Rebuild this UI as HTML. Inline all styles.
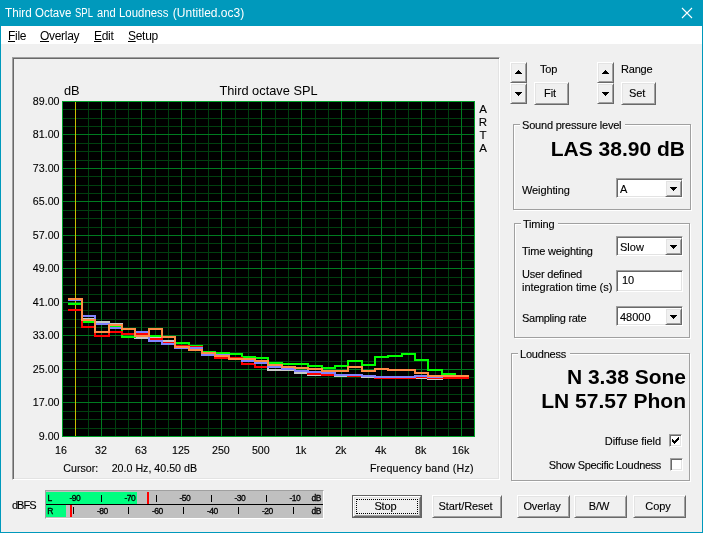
<!DOCTYPE html>
<html><head><meta charset="utf-8"><title>Third Octave SPL and Loudness</title>
<style>
html,body{margin:0;padding:0}
body{will-change:transform;width:703px;height:533px;position:relative;overflow:hidden;background:#f0f0f0;font-family:"Liberation Sans",sans-serif;font-size:11px;color:#000}
*{box-sizing:border-box}
.abs,.t,.btn,.sunk,.grp,.ui,.ax{position:absolute}
#win{position:absolute;left:0;top:0;width:703px;height:533px;border:1px solid #0099bc;border-top:none}
#title{position:absolute;left:0;top:0;width:703px;height:26px;background:#0099bc;color:#fff;font-size:12px}
#title span{position:absolute;top:6px;white-space:nowrap;transform-origin:0 0}
#menu{position:absolute;left:1px;top:26px;width:701px;height:18px;background:#fff;font-size:12px}
#menu span{position:absolute;top:3px;white-space:nowrap;letter-spacing:-0.3px}
#menu u{text-decoration:underline;text-underline-offset:1px}
.ui,.ax,.btn span,.lbl{-webkit-text-stroke:0.12px #000}
.ui{white-space:nowrap;font-size:11px;letter-spacing:-0.2px;line-height:13px}
.ax{white-space:nowrap;font-size:10.67px;line-height:12px}
.btn{background:#f0f0f0;border:1px solid;border-color:#fff #696969 #696969 #fff;box-shadow:inset 1px 1px 0 #e3e3e3, inset -1px -1px 0 #a0a0a0;text-align:center;font-size:11px;white-space:nowrap}
.btn span{position:absolute;left:0;right:3px;text-align:center;letter-spacing:-0.1px}
.sunk{background:#fff;border:1px solid;border-color:#a0a0a0 #fff #fff #a0a0a0;box-shadow:inset 1px 1px 0 #696969, inset -1px -1px 0 #e3e3e3}
.grp{border:1px solid #a0a0a0;box-shadow:inset 1px 1px 0 #fff, 1px 1px 0 #fff}
.grp .lbl{position:absolute;top:-6px;background:#f0f0f0;padding:0 4px 0 2px;white-space:nowrap;font-size:11px;line-height:13px;letter-spacing:-0.2px}
.big{position:absolute;font-weight:bold;font-size:21px;white-space:nowrap;text-align:right;line-height:24px}
.plot{position:absolute;left:62px;top:101px}
.tri{position:absolute;width:0;height:0;border-left:4px solid transparent;border-right:4px solid transparent}
.tri.up{border-bottom:4px solid #000}
.tri.dn{border-top:4px solid #000}
.chk{position:absolute;width:13px;height:13px;background:#fff;border:1px solid;border-color:#a0a0a0 #fff #fff #a0a0a0;box-shadow:inset 1px 1px 0 #696969, inset -1px -1px 0 #e3e3e3}
.mt{position:absolute;font-size:8.5px;line-height:10px;letter-spacing:-0.5px;font-weight:normal;-webkit-text-stroke:0.3px #000;white-space:nowrap;transform:translateX(-50%)}
.tick{position:absolute;width:1px;height:7px;background:#000}
</style></head><body>
<div id="win"></div>
<div id="title"><span style="left:5.1px;transform:scaleX(0.975)">Third</span> <span style="left:35.3px;transform:scaleX(0.955)">Octave</span> <span style="left:75.2px;transform:scaleX(0.790)">SPL</span> <span style="left:97.3px;transform:scaleX(0.930)">and</span> <span style="left:119.3px;transform:scaleX(0.951)">Loudness</span> <span style="left:172.8px;transform:scaleX(1.000)">(Untitled.oc3)</span> 
<svg class="abs" style="left:681px;top:7px" width="12" height="12" viewBox="0 0 12 12"><path d="M1 1L11 11M11 1L1 11" stroke="#fff" stroke-width="1.1" fill="none"/></svg></div>
<div id="menu"><span style="left:7px"><u>F</u>ile</span><span style="left:39px"><u>O</u>verlay</span><span style="left:93px"><u>E</u>dit</span><span style="left:127px"><u>S</u>etup</span></div>

<div class="abs" style="left:12px;top:57px;width:488px;height:423px;border:1px solid;border-color:#a0a0a0 #fff #fff #a0a0a0;box-shadow:inset 1px 1px 0 #696969, inset -1px -1px 0 #e3e3e3"></div>
<svg class="plot" width="413" height="336" viewBox="0 0 413 336" shape-rendering="crispEdges"><rect x="0" y="0" width="413" height="336" fill="#000"/><path d="M0 8.5H413M0 17.5H413M0 25.5H413M0 42.5H413M0 50.5H413M0 59.5H413M0 75.5H413M0 84.5H413M0 92.5H413M0 109.5H413M0 117.5H413M0 126.5H413M0 142.5H413M0 151.5H413M0 159.5H413M0 176.5H413M0 184.5H413M0 193.5H413M0 209.5H413M0 218.5H413M0 226.5H413M0 243.5H413M0 251.5H413M0 260.5H413M0 276.5H413M0 285.5H413M0 293.5H413M0 310.5H413M0 318.5H413M0 327.5H413" stroke="#00400f" stroke-width="1" fill="none"/><path d="M13.5 0V336M26.5 0V336M53.5 0V336M66.5 0V336M93.5 0V336M106.5 0V336M133.5 0V336M146.5 0V336M173.5 0V336M186.5 0V336M213.5 0V336M226.5 0V336M253.5 0V336M266.5 0V336M293.5 0V336M306.5 0V336M333.5 0V336M346.5 0V336M373.5 0V336M386.5 0V336M412.5 0V336" stroke="#00400f" stroke-width="1" fill="none"/><path d="M0 0.5H413M0 33.5H413M0 67.5H413M0 100.5H413M0 134.5H413M0 167.5H413M0 201.5H413M0 234.5H413M0 268.5H413M0 301.5H413M0 335.5H413" stroke="#007a20" stroke-width="1" fill="none"/><path d="M0.5 0V336M39.5 0V336M79.5 0V336M119.5 0V336M159.5 0V336M199.5 0V336M239.5 0V336M279.5 0V336M319.5 0V336M359.5 0V336M399.5 0V336" stroke="#007a20" stroke-width="1" fill="none"/><rect x="0.5" y="0.5" width="412" height="335" fill="none" stroke="#00a028"/><path d="M13.5 1V335" stroke="#c8be00" stroke-width="1"/><g transform="translate(-62,-101)" fill="none" stroke-width="2" stroke-linejoin="miter"><path d="M68 299H82V319H95V322H109V324H122V329H135V338H149V337H162V341H175V347H189V350H202V353H215V356H229V359H242V361H255V363H268V370H282V370H295V373H308V375H322V375H335V376H348V376H362V377H375V378H388V378H402V378H415V378H428V379H442V378H455V378H469" stroke="#c8c8c8"/><path d="M68 304H82V322H95V324H109V326H122V337H135V336H149V336H162V337H175V343H189V346H202V352H215V353H229V354H242V357H255V358H268V363H282V364H295V364H308V366H322V368H335V366H348V361H362V365H375V357H388V356H402V354H415V360H428V370H442V374H455V376H469" stroke="#00ff00"/><path d="M68 310H82V327H95V336H109V332H122V334H135V334H149V339H162V343H175V346H189V347H202V353H215V358H229V358H242V364H255V367H268V367H282V369H295V371H308V374H322V375H335V375H348V376H362V376H375V378H388V378H402V378H415V377H428V378H442V378H455V378H469" stroke="#ff0000"/><path d="M68 300H82V316H95V324H109V328H122V329H135V332H149V341H162V344H175V348H189V348H202V355H215V355H229V359H242V361H255V363H268V367H282V369H295V371H308V372H322V373H335V375H348V375H362V376H375V377H388V377H402V377H415V376H428V377H442V376H455V376H469" stroke="#8282ff"/><path d="M68 299H82V320H95V332H109V325H122V329H135V336H149V329H162V337H175V347H189V350H202V353H215V356H229V359H242V359H255V361H268V365H282V367H295V368H308V369H322V371H335V371H348V367H362V371H375V369H388V370H402V370H415V373H428V376H442V376H455V376H469" stroke="#ff8c46"/></g></svg>
<div class="ax" style="left:64px;top:84px;font-size:12.8px;-webkit-text-stroke:0;line-height:14px">dB</div>
<div class="ax" style="left:168.5px;top:84px;width:200px;text-align:center;font-size:12.8px;-webkit-text-stroke:0;line-height:14px">Third octave SPL</div>
<div class="ax" style="left:0px;width:59.5px;text-align:right;top:95px">89.00</div>
<div class="ax" style="left:0px;width:59.5px;text-align:right;top:128px">81.00</div>
<div class="ax" style="left:0px;width:59.5px;text-align:right;top:162px">73.00</div>
<div class="ax" style="left:0px;width:59.5px;text-align:right;top:195px">65.00</div>
<div class="ax" style="left:0px;width:59.5px;text-align:right;top:229px">57.00</div>
<div class="ax" style="left:0px;width:59.5px;text-align:right;top:262px">49.00</div>
<div class="ax" style="left:0px;width:59.5px;text-align:right;top:296px">41.00</div>
<div class="ax" style="left:0px;width:59.5px;text-align:right;top:329px">33.00</div>
<div class="ax" style="left:0px;width:59.5px;text-align:right;top:363px">25.00</div>
<div class="ax" style="left:0px;width:59.5px;text-align:right;top:396px">17.00</div>
<div class="ax" style="left:0px;width:59.5px;text-align:right;top:430px">9.00</div>
<div class="ax" style="left:41.0px;width:40px;text-align:center;top:444px">16</div>
<div class="ax" style="left:81.0px;width:40px;text-align:center;top:444px">32</div>
<div class="ax" style="left:120.9px;width:40px;text-align:center;top:444px">63</div>
<div class="ax" style="left:160.9px;width:40px;text-align:center;top:444px">125</div>
<div class="ax" style="left:200.9px;width:40px;text-align:center;top:444px">250</div>
<div class="ax" style="left:240.8px;width:40px;text-align:center;top:444px">500</div>
<div class="ax" style="left:280.8px;width:40px;text-align:center;top:444px">1k</div>
<div class="ax" style="left:320.8px;width:40px;text-align:center;top:444px">2k</div>
<div class="ax" style="left:360.7px;width:40px;text-align:center;top:444px">4k</div>
<div class="ax" style="left:400.7px;width:40px;text-align:center;top:444px">8k</div>
<div class="ax" style="left:440.7px;width:40px;text-align:center;top:444px">16k</div>
<div class="ax" style="left:63.3px;top:462px">Cursor:</div>
<div class="ax" style="left:111.7px;top:462px">20.0 Hz, 40.50 dB</div>
<div class="ax" style="left:273.8px;width:200px;text-align:right;top:462px;letter-spacing:0.2px">Frequency band (Hz)</div>
<div class="ax" style="left:477px;width:12px;text-align:center;top:103px;font-size:11.5px;line-height:13px">A</div>
<div class="ax" style="left:477px;width:12px;text-align:center;top:116px;font-size:11.5px;line-height:13px">R</div>
<div class="ax" style="left:477px;width:12px;text-align:center;top:129px;font-size:11.5px;line-height:13px">T</div>
<div class="ax" style="left:477px;width:12px;text-align:center;top:142px;font-size:11.5px;line-height:13px">A</div>
<div class="btn" style="left:510px;top:62px;width:17px;height:21px;"></div><div class="btn" style="left:510px;top:83px;width:17px;height:21px;"></div><svg class="abs" style="left:515px;top:70px" width="7" height="4" viewBox="0 0 7 4" shape-rendering="crispEdges"><path d="M3 0h1v1h1v1h1v1h1v1h-7v-1h1v-1h1v-1h1z" fill="#000"/></svg><svg class="abs" style="left:515px;top:92px" width="7" height="4" viewBox="0 0 7 4" shape-rendering="crispEdges"><path d="M0 0h7v1h-1v1h-1v1h-1v1h-1v-1h-1v-1h-1v-1h-1z" fill="#000"/></svg>
<div class="btn" style="left:597px;top:62px;width:17px;height:21px;"></div><div class="btn" style="left:597px;top:83px;width:17px;height:21px;"></div><svg class="abs" style="left:602px;top:70px" width="7" height="4" viewBox="0 0 7 4" shape-rendering="crispEdges"><path d="M3 0h1v1h1v1h1v1h1v1h-7v-1h1v-1h1v-1h1z" fill="#000"/></svg><svg class="abs" style="left:602px;top:92px" width="7" height="4" viewBox="0 0 7 4" shape-rendering="crispEdges"><path d="M0 0h7v1h-1v1h-1v1h-1v1h-1v-1h-1v-1h-1v-1h-1z" fill="#000"/></svg>
<div class="ui" style="left:540px;top:63px">Top</div>
<div class="ui" style="left:621px;top:63px">Range</div>
<div class="btn" style="left:534px;top:82px;width:35px;height:23px;"><span style="top:4px">Fit</span></div>
<div class="btn" style="left:621px;top:82px;width:35px;height:23px;"><span style="top:4px">Set</span></div>
<div class="grp" style="left:513px;top:124px;width:178px;height:86px"><div class="lbl" style="left:6px">Sound pressure level</div></div>
<div class="grp" style="left:514px;top:223px;width:176px;height:115px"><div class="lbl" style="left:6px">Timing</div></div>
<div class="grp" style="left:511px;top:353px;width:179px;height:128px"><div class="lbl" style="left:6px">Loudness</div></div>
<div class="big" style="left:500px;width:185px;top:137px">LAS 38.90 dB</div>
<div class="big" style="left:500px;width:186px;top:365px">N 3.38 Sone</div>
<div class="big" style="left:500px;width:186px;top:389px">LN 57.57 Phon</div>
<div class="ui" style="left:522px;top:184px;letter-spacing:-0.12px">Weighting</div>
<div class="sunk" style="left:616px;top:178px;width:67px;height:20px"></div><div class="btn" style="left:665px;top:180px;width:17px;height:17px;"></div><svg class="abs" style="left:670px;top:187px" width="7" height="4" viewBox="0 0 7 4" shape-rendering="crispEdges"><path d="M0 0h7v1h-1v1h-1v1h-1v1h-1v-1h-1v-1h-1v-1h-1z" fill="#000"/></svg><div class="ui" style="left:620px;top:183px;letter-spacing:0">A</div>
<div class="ui" style="left:522px;top:245px">Time weighting</div>
<div class="sunk" style="left:616px;top:236px;width:67px;height:20px"></div><div class="btn" style="left:665px;top:238px;width:17px;height:17px;"></div><svg class="abs" style="left:670px;top:245px" width="7" height="4" viewBox="0 0 7 4" shape-rendering="crispEdges"><path d="M0 0h7v1h-1v1h-1v1h-1v1h-1v-1h-1v-1h-1v-1h-1z" fill="#000"/></svg><div class="ui" style="left:620px;top:241px;letter-spacing:0">Slow</div>
<div class="ui" style="left:522px;top:268px">User defined</div>
<div class="ui" style="left:522px;top:281px;letter-spacing:-0.04px">integration time (s)</div>
<div class="sunk" style="left:616px;top:270px;width:67px;height:22px"></div>
<div class="ui" style="left:622px;top:274px;letter-spacing:0">10</div>
<div class="ui" style="left:522px;top:312px;letter-spacing:-0.28px">Sampling rate</div>
<div class="sunk" style="left:616px;top:306px;width:67px;height:20px"></div><div class="btn" style="left:665px;top:308px;width:17px;height:17px;"></div><svg class="abs" style="left:670px;top:315px" width="7" height="4" viewBox="0 0 7 4" shape-rendering="crispEdges"><path d="M0 0h7v1h-1v1h-1v1h-1v1h-1v-1h-1v-1h-1v-1h-1z" fill="#000"/></svg><div class="ui" style="left:620px;top:311px;letter-spacing:0">48000</div>
<div class="ui" style="left:500px;width:161px;text-align:right;top:435px;letter-spacing:-0.08px">Diffuse field</div>
<div class="chk" style="left:669px;top:434px"></div>
<svg class="abs" style="left:672px;top:437px" width="7" height="7" viewBox="0 0 7 7" shape-rendering="crispEdges"><path d="M0 2v3M1 3v3M2 4v3M3 3v3M4 2v3M5 1v3M6 0v3" stroke="#000" stroke-width="1" fill="none" transform="translate(0.5,0)"/></svg>
<div class="ui" style="left:500px;width:161px;text-align:right;top:459px;letter-spacing:-0.35px">Show Specific Loudness</div>
<div class="chk" style="left:670px;top:458px"></div>
<div class="abs" style="left:352px;top:495px;width:70px;height:23px;border:1px solid #646464"></div>
<div class="btn" style="left:353px;top:496px;width:68px;height:21px;"><span style="top:3px">Stop</span></div>
<div class="abs" style="left:356px;top:499px;width:62px;height:15px;border:1px dotted #000"></div>
<div class="btn" style="left:432px;top:495px;width:70px;height:23px;letter-spacing:0.05px"><span style="top:4px">Start/Reset</span></div>
<div class="btn" style="left:517px;top:495px;width:53px;height:23px;"><span style="top:4px">Overlay</span></div>
<div class="btn" style="left:574px;top:495px;width:53px;height:23px;"><span style="top:4px">B/W</span></div>
<div class="btn" style="left:633px;top:495px;width:53px;height:23px;"><span style="top:4px">Copy</span></div>
<div class="ui" style="left:12px;top:499px;letter-spacing:-1px">dBFS</div>
<div class="abs" style="left:45px;top:490px;width:279px;height:29px;background:#c0c0c0;border:1px solid;border-color:#a0a0a0 #fff #fff #a0a0a0"></div>
<div class="abs" style="left:46px;top:492px;width:91px;height:12px;background:#00ff80"></div>
<div class="abs" style="left:46px;top:505px;width:20px;height:12px;background:#00ff80"></div>
<div class="abs" style="left:46px;top:504px;width:277px;height:1px;background:#000"></div>
<div class="abs" style="left:147px;top:492px;width:2px;height:12px;background:#ff0000"></div>
<div class="abs" style="left:70px;top:505px;width:2px;height:12px;background:#ff0000"></div>
<div class="mt" style="left:49.5px;top:493px">L</div>
<div class="mt" style="left:50px;top:506px">R</div>
<div class="mt" style="left:74.8px;top:493px">-90</div>
<div class="tick" style="left:73px;top:507px"></div>
<div class="mt" style="left:102.3px;top:506px">-80</div>
<div class="tick" style="left:101px;top:495px"></div>
<div class="mt" style="left:129.8px;top:493px">-70</div>
<div class="tick" style="left:128px;top:507px"></div>
<div class="mt" style="left:157.3px;top:506px">-60</div>
<div class="tick" style="left:156px;top:495px"></div>
<div class="mt" style="left:184.8px;top:493px">-50</div>
<div class="tick" style="left:183px;top:507px"></div>
<div class="mt" style="left:212.3px;top:506px">-40</div>
<div class="tick" style="left:211px;top:495px"></div>
<div class="mt" style="left:239.8px;top:493px">-30</div>
<div class="tick" style="left:238px;top:507px"></div>
<div class="mt" style="left:267.3px;top:506px">-20</div>
<div class="tick" style="left:266px;top:495px"></div>
<div class="mt" style="left:294.8px;top:493px">-10</div>
<div class="tick" style="left:293px;top:507px"></div>
<div class="mt" style="left:316.3px;top:493px">dB</div>
<div class="mt" style="left:316.3px;top:506px">dB</div>
</body></html>
